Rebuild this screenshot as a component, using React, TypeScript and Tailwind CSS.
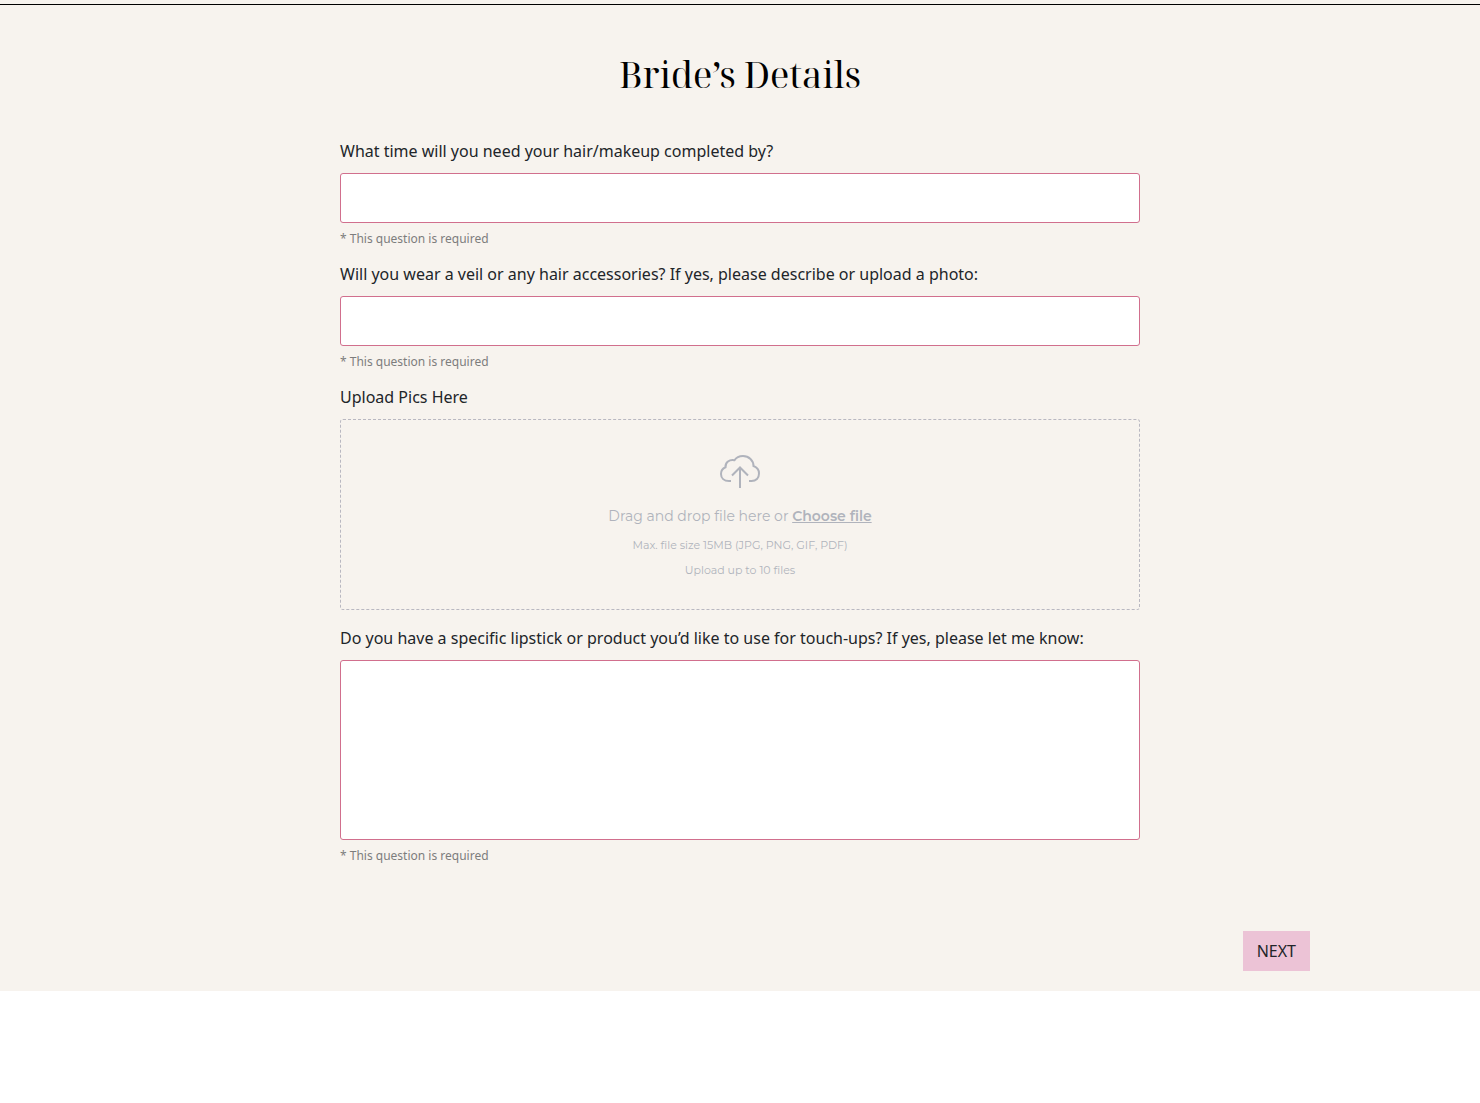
import React, { useState } from 'react';

const INPUT_CLASS =
  'block w-full rounded-[3px] border border-[#d16f8d] bg-white px-3 text-base text-[#212529] outline-none focus:border-[#b0486a]';

interface QuestionProps {
  id: string;
  label: string;
  multiline?: boolean;
  value: string;
  onChange: (id: string, value: string) => void;
}

function Question({ id, label, multiline = false, value, onChange }: QuestionProps) {
  return (
    <div>
      <label htmlFor={id} className="mb-2.5 block text-base leading-6">
        {label}
      </label>
      {multiline ? (
        <textarea
          id={id}
          value={value}
          onChange={(e) => onChange(id, e.target.value)}
          required
          className={`${INPUT_CLASS} h-[180px] resize-none py-2`}
        />
      ) : (
        <input
          id={id}
          type="text"
          value={value}
          onChange={(e) => onChange(id, e.target.value)}
          required
          className={`${INPUT_CLASS} h-[50px]`}
        />
      )}
      <p className="mt-2 text-xs leading-[15px] text-[#7d7d7d]">* This question is required</p>
    </div>
  );
}

function CloudUploadIcon() {
  return (
    <svg
      width="42"
      height="34"
      viewBox="0 0 42 34"
      fill="none"
      stroke="#b0b3bc"
      strokeWidth="2"
      aria-hidden="true"
    >
      <path d="M12 27H10C5 27 2 24 2 20C2 17 3.5 14.5 6.5 13.3C6 8.5 10.5 5 15.5 6.2C17.5 3 20.5 2 24 2C30 2 34.5 6.5 34.5 12C38 13.3 40 16 40 19.5C40 24 37 27 32.5 27H30" />
      <path d="M21 34V13M13 21.5L21 13.5L29 21.5" />
    </svg>
  );
}

function UploadBox() {
  return (
    <div>
      <label htmlFor="pics" className="mb-2.5 block text-base leading-6">
        Upload Pics Here
      </label>
      <div className="flex flex-col items-center rounded-[3px] border border-dashed border-[#b9b8c1] pt-[34px] pb-[26px] text-center font-['Proxima_Nova',Montserrat,Lato,sans-serif] text-[#b0b3bc]">
        <CloudUploadIcon />
        <p className="mt-4 text-sm leading-6">
          Drag and drop file here or{' '}
          <label htmlFor="pics" className="cursor-pointer font-semibold underline">
            Choose file
          </label>
        </p>
        <input id="pics" type="file" multiple accept=".jpg,.png,.gif,.pdf" className="sr-only" />
        <p className="mt-[5px] text-[11px] leading-[25px]">Max. file size 15MB (JPG, PNG, GIF, PDF)</p>
        <p className="text-[11px] leading-[25px]">Upload up to 10 files</p>
      </div>
    </div>
  );
}

export default function App() {
  const [answers, setAnswers] = useState<Record<string, string>>({});

  const handleChange = (id: string, value: string) => {
    setAnswers((prev) => ({ ...prev, [id]: value }));
  };

  return (
    <main className="bg-[#f7f3ee] pt-1 pb-5 font-['Noto_Sans',sans-serif] text-[#212529]">
      <form className="border-t border-black" onSubmit={(e) => e.preventDefault()}>
        <h1 className="pt-11 text-center font-['Noto_Serif_Display','Liberation_Serif',serif] text-4xl leading-[52px] text-black">
          Bride’s Details
        </h1>

        <div className="mx-auto mt-[38px] flex max-w-[800px] flex-col gap-4">
          <Question
            id="time"
            label="What time will you need your hair/makeup completed by?"
            value={answers.time ?? ''}
            onChange={handleChange}
          />
          <Question
            id="veil"
            label="Will you wear a veil or any hair accessories? If yes, please describe or upload a photo:"
            value={answers.veil ?? ''}
            onChange={handleChange}
          />
          <UploadBox />
          <Question
            id="lipstick"
            label="Do you have a specific lipstick or product you’d like to use for touch-ups? If yes, please let me know:"
            multiline
            value={answers.lipstick ?? ''}
            onChange={handleChange}
          />
        </div>

        <div className="mx-auto mt-[68px] flex max-w-[1140px] justify-end">
          <button type="submit" className="h-10 cursor-pointer bg-[#ecc3d6] px-3.5 text-base">
            NEXT
          </button>
        </div>
      </form>
    </main>
  );
}
